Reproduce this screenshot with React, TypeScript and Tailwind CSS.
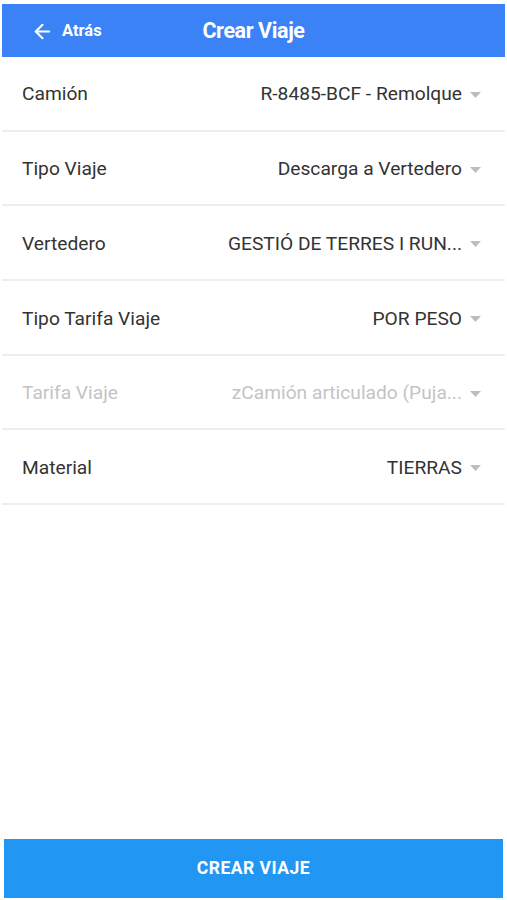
import { ArrowLeft } from "lucide-react";

const ROWS = [
  { label: "Camión", value: "R-8485-BCF - Remolque" },
  { label: "Tipo Viaje", value: "Descarga a Vertedero" },
  { label: "Vertedero", value: "GESTIÓ DE TERRES I RUN..." },
  { label: "Tipo Tarifa Viaje", value: "POR PESO" },
  { label: "Tarifa Viaje", value: "zCamión articulado (Puja...", disabled: true },
  { label: "Material", value: "TIERRAS" },
];

function Caret() {
  return (
    <svg width="11" height="6" viewBox="0 0 11 6" className="ml-[8px] shrink-0">
      <path d="M0 0 L11 0 L5.5 6 Z" fill="#bdbdbd" />
    </svg>
  );
}

export default function App() {
  return (
    <div
      className="flex h-[900px] flex-col bg-white"
      style={{ fontFamily: "Roboto, 'Noto Sans', sans-serif" }}
    >
      {/* Top bar */}
      <div className="mx-[2px] mt-[4px] flex h-[53px] items-center bg-[#3b82f6] pt-[2px] text-white">
        <div className="flex w-[170px] items-center pl-[29px]">
          <ArrowLeft size={23} strokeWidth={2.2} />
          <span className="ml-[8px] text-[16.5px] font-bold">Atrás</span>
        </div>
        <div className="flex-1 pr-[170px] text-center text-[21.5px] font-bold tracking-[-0.4px]">
          Crear Viaje
        </div>
      </div>

      {/* Form rows */}
      <div className="mx-[2px] flex flex-col">
        {ROWS.map((row) => (
          <div
            key={row.label}
            className="flex h-[74.7px] items-center justify-between border-b-2 border-[#eeeeee] pl-[20px] pr-[24px] pt-[3px]"
          >
            <span
              className={`text-[19.2px] ${row.disabled ? "text-[#c4c4c4]" : "text-[#333333]"}`}
            >
              {row.label}
            </span>
            <div className="flex items-center">
              <span
                className={`text-[19.2px] ${row.disabled ? "text-[#c4c4c4]" : "text-[#333333]"}`}
              >
                {row.value}
              </span>
              <Caret />
            </div>
          </div>
        ))}
      </div>

      <div className="flex-1" />

      {/* Submit */}
      <button className="mx-[4px] mb-[2px] h-[59px] bg-[#2196f3] text-[17.5px] font-bold tracking-[0.5px] text-white">
        CREAR VIAJE
      </button>
    </div>
  );
}
